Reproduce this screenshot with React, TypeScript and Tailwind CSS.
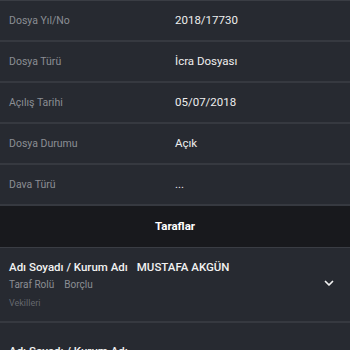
import React from 'react';

const rows: { label: string; value: string }[] = [
    { label: 'Dosya Yıl/No', value: '2018/17730' },
    { label: 'Dosya Türü', value: 'İcra Dosyası' },
    { label: 'Açılış Tarihi', value: '05/07/2018' },
    { label: 'Dosya Durumu', value: 'Açık' },
    { label: 'Dava Türü', value: '...' },
];

const App: React.FC = () => {
    return (
        <div className="w-[350px] h-[350px] overflow-hidden bg-[#272a31] font-['Roboto',sans-serif]">
            <div className="border-t border-[#3a3d44]">
                {rows.map((r) => (
                    <div key={r.label} className="flex items-center h-[41px] border-b-2 border-[#363940]">
                        <span className="w-[175px] pl-[9px] text-[10.5px] text-[#8b8e94]">{r.label}</span>
                        <span className="text-[11.5px] text-[#eeeeee]">{r.value}</span>
                    </div>
                ))}
            </div>
            <div className="h-[42px] bg-[#18191d] flex items-center justify-center border-b border-[#3a3d44]">
                <span className="text-[11.5px] font-bold text-white">Taraflar</span>
            </div>
            <div className="flex border-b-2 border-[#363940] h-[75px] pl-[9px] pr-[15px]">
                <div className="flex-1 flex flex-col pt-[11px]">
                    <div className="flex text-[11.5px] leading-[17px] font-medium text-[#f2f2f2]">
                        <span>Adı Soyadı / Kurum Adı</span>
                        <span className="ml-[9px]">MUSTAFA AKGÜN</span>
                    </div>
                    <div className="flex text-[10px] leading-[18px] text-[#8b8e94]">
                        <span>Taraf Rolü</span>
                        <span className="ml-[10px]">Borçlu</span>
                    </div>
                    <div className="text-[9px] leading-[18px] text-[#65686e]">Vekilleri</div>
                </div>
                <svg width="12" height="12" viewBox="0 0 24 24" fill="none" stroke="#f2f2f2" strokeWidth="3.5" strokeLinecap="round" strokeLinejoin="round" className="self-center -mt-[4px]">
                    <path d="M5 9l7 7 7-7" />
                </svg>
            </div>
            <div className="pt-[20px] pl-[9px] text-[11.5px] leading-[17px] font-medium text-[#f2f2f2]">
                Adı Soyadı / Kurum Adı
            </div>
        </div>
    );
};

export default App;
